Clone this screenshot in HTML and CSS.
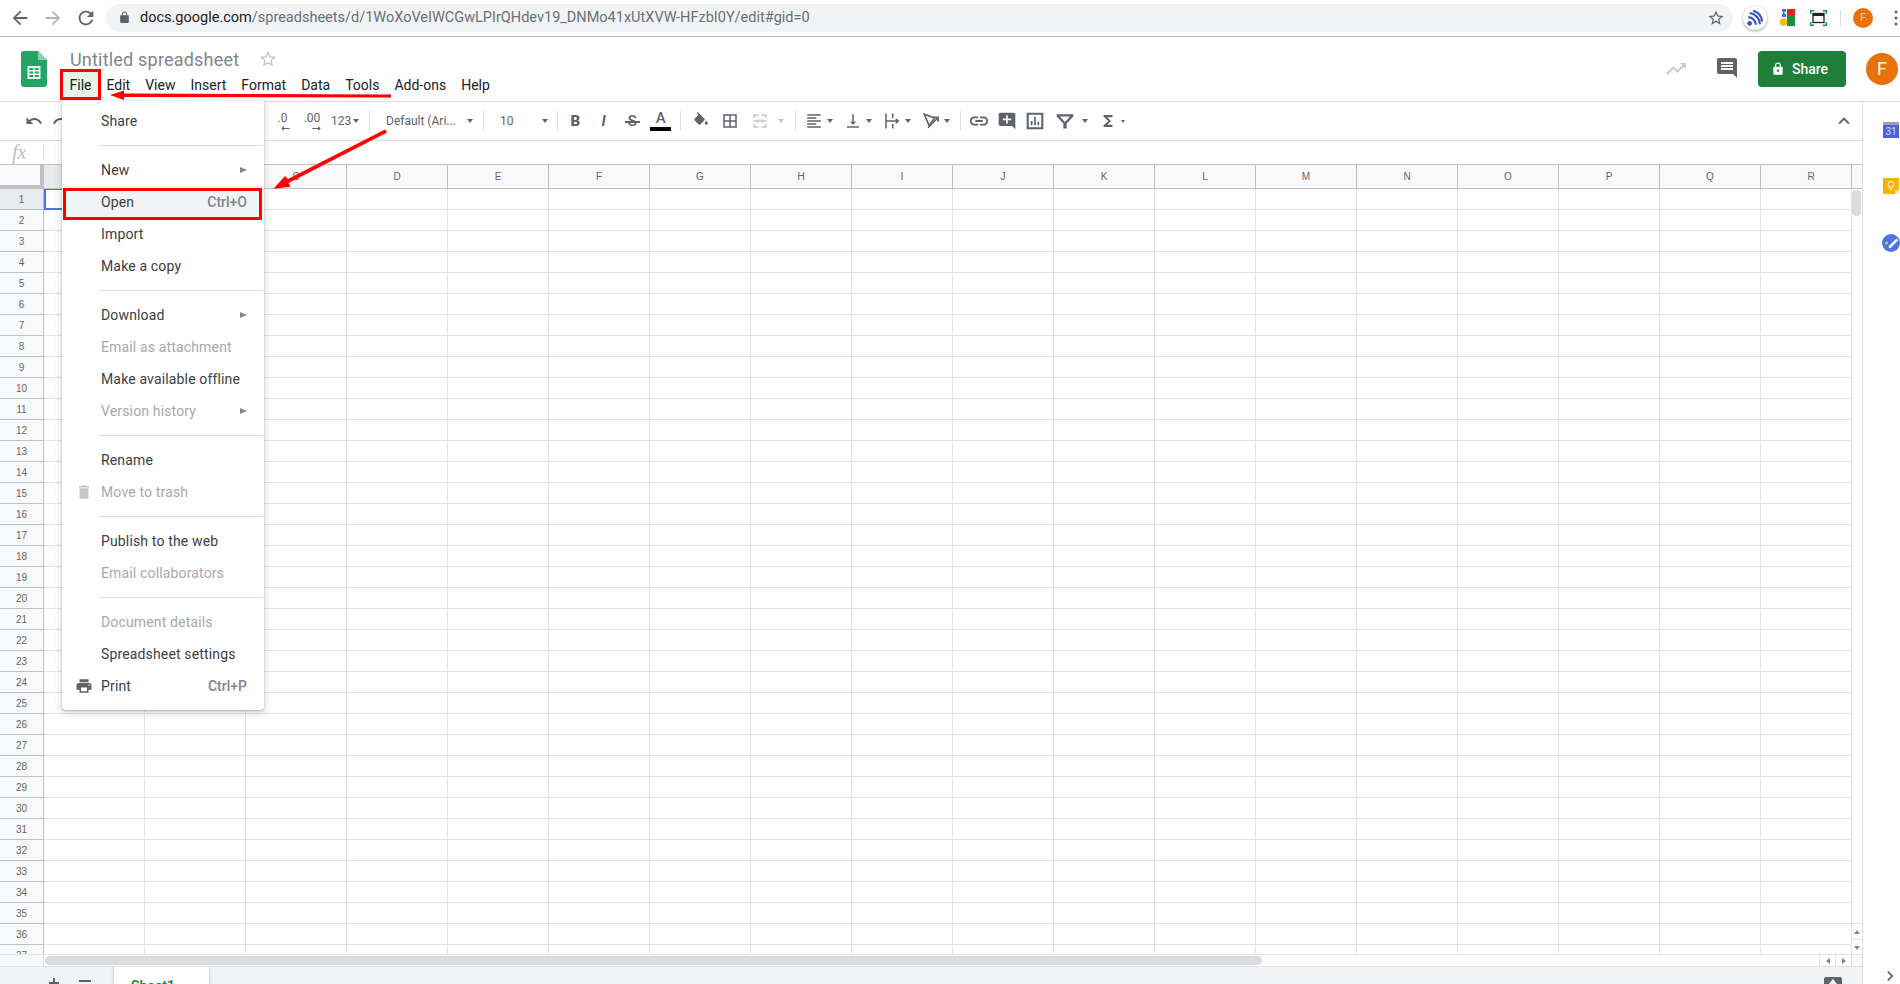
FILE: index.html
```html
<!DOCTYPE html>
<html lang="en">
<head>
  <meta charset="UTF-8">
  <title>Untitled spreadsheet - Google Sheets</title>
  <link rel="stylesheet" href="styles.css">
</head>
<body>
  <!-- browser bar -->
  <div class="browser">
    <svg class="nav-icon" viewBox="0 0 24 24"><path d="M20 11H7.83l5.59-5.59L12 4l-8 8 8 8 1.41-1.41L7.83 13H20v-2z"/></svg>
    <svg class="nav-icon nav-off" viewBox="0 0 24 24"><path d="M12 4l-1.41 1.41L16.17 11H4v2h12.17l-5.58 5.59L12 20l8-8z"/></svg>
    <svg class="nav-icon" viewBox="0 0 24 24"><path d="M17.65 6.35C16.2 4.9 14.21 4 12 4c-4.42 0-7.99 3.58-7.99 8s3.57 8 7.99 8c3.73 0 6.84-2.55 7.73-6h-2.08c-.82 2.33-3.04 4-5.65 4-3.31 0-6-2.69-6-6s2.69-6 6-6c1.66 0 3.14.69 4.22 1.78L13 11h7V4l-2.35 2.35z"/></svg>
    <div class="omnibox">
      <svg class="lock-icon" viewBox="0 0 24 24"><path d="M18 8h-1V6c0-2.76-2.24-5-5-5S7 3.24 7 6v2H6c-1.1 0-2 .9-2 2v10c0 1.1.9 2 2 2h12c1.1 0 2-.9 2-2V10c0-1.1-.9-2-2-2zm-2.9 0H8.9V6c0-1.71 1.39-3.1 3.1-3.1 1.71 0 3.1 1.39 3.1 3.1v2z"/></svg>
      <span class="url"><b>docs.google.com</b>/spreadsheets/d/1WoXoVeIWCGwLPIrQHdev19_DNMo41xUtXVW-HFzbI0Y/edit#gid=0</span>
      <svg class="bookmark" viewBox="0 0 24 24"><path d="M22 9.24l-7.19-.62L12 2 9.19 8.63 2 9.24l5.46 4.73L5.82 21 12 17.27 18.18 21l-1.63-7.03L22 9.24zM12 15.4l-3.76 2.27 1-4.28-3.32-2.88 4.38-.38L12 6.1l1.71 4.04 4.38.38-3.32 2.88 1 4.28L12 15.4z"/></svg>
    </div>
    <div class="ext-rss">
      <svg viewBox="0 0 20 20"><circle cx="4" cy="16" r="2.6" fill="#3b4fc4"/><path d="M2.5 9a9 9 0 0 1 8.500 8.500M4 4.500A13 13 0 0 1 15.500 17M8 2a14 14 0 0 1 10 12" fill="none" stroke="#3b4fc4" stroke-width="2.4"/></svg>
    </div>
    <svg class="ext-maps" viewBox="0 0 16 17"><path d="M8 0h8v6H8z" fill="#ea2027"/><path d="M8 6h8v11H8z" fill="#1c8f3c"/><circle cx="4.500" cy="13" r="3.800" fill="#f1bb1c"/><path d="M3 0h4v2.500H5.500V5H7v3H3V5h1V2.500H3z" fill="#3d6fd8"/></svg>
    <svg class="ext-shot" viewBox="0 0 17 16"><path d="M.7 4V.7h3.500M13 .7h3.300V4M16.300 12v3.300H13M4 15.300H.7V12" fill="none" stroke="#1c8f3c" stroke-width="1.400"/><rect x="3" y="3.500" width="11" height="9" fill="none" stroke="#222" stroke-width="1.300"/><path d="M3 5h11" stroke="#222" stroke-width="2"/></svg>
    <span class="browser-sep"></span>
    <span class="browser-avatar">F</span>
    <svg class="browser-menu" viewBox="0 0 4 16"><circle cx="2" cy="2" r="1.5"/><circle cx="2" cy="8" r="1.5"/><circle cx="2" cy="14" r="1.5"/></svg>
  </div>

  <!-- docs header -->
  <header class="doc-header">
    <svg class="sheets-logo" viewBox="0 0 26 36"><path d="M3 0h14l9 9v24a3 3 0 0 1-3 3H3a3 3 0 0 1-3-3V3a3 3 0 0 1 3-3z" fill="#23a566"/><path d="M17 0l9 9h-9z" fill="#8ed1b1"/><path d="M6.500 15h13v13h-13z" fill="#f1f8f4"/><path d="M8.300 17h4v2h-4zM13.700 17h4v2h-4zM8.300 20.500h4v2h-4zM13.700 20.500h4v2h-4zM8.300 24h4v2h-4zM13.700 24h4v2h-4z" fill="#23a566"/></svg>
    <div class="doc-titles">
      <div class="doc-title-row">
        <span class="doc-title">Untitled spreadsheet</span>
        <svg class="doc-star" viewBox="0 0 24 24"><path d="M22 9.24l-7.19-.62L12 2 9.19 8.63 2 9.24l5.46 4.73L5.82 21 12 17.27 18.18 21l-1.63-7.03L22 9.24zM12 15.4l-3.76 2.27 1-4.28-3.32-2.88 4.38-.38L12 6.1l1.71 4.04 4.38.38-3.32 2.88 1 4.28L12 15.4z"/></svg>
      </div>
      <nav class="menubar">
        <span class="menubar-item open">File</span>
        <span class="menubar-item">Edit</span>
        <span class="menubar-item">View</span>
        <span class="menubar-item">Insert</span>
        <span class="menubar-item">Format</span>
        <span class="menubar-item">Data</span>
        <span class="menubar-item">Tools</span>
        <span class="menubar-item">Add-ons</span>
        <span class="menubar-item">Help</span>
      </nav>
    </div>
    <div class="doc-actions">
      <svg class="trend-icon" viewBox="0 0 24 24"><path d="M16 6l2.290 2.290-4.880 4.880-4-4L2 16.590 3.410 18l6-6 4 4 6.300-6.290L22 12V6z"/></svg>
      <svg class="comments-icon" viewBox="0 0 24 24"><path d="M21.990 4c0-1.100-.890-2-1.990-2H4c-1.100 0-2 .900-2 2v12c0 1.100.900 2 2 2h14l4 4-.010-18zM18 14H6v-2h12v2zm0-3H6V9h12v2zm0-3H6V6h12v2z"/></svg>
      <button class="share-btn">
        <svg viewBox="0 0 24 24"><path d="M18 8h-1V6c0-2.760-2.240-5-5-5S7 3.240 7 6v2H6c-1.100 0-2 .900-2 2v10c0 1.100.900 2 2 2h12c1.100 0 2-.900 2-2V10c0-1.100-.900-2-2-2zm-6 9c-1.100 0-2-.900-2-2s.900-2 2-2 2 .900 2 2-.900 2-2 2zm3.100-9H8.900V6c0-1.710 1.390-3.100 3.100-3.100 1.710 0 3.100 1.390 3.100 3.100v2z"/></svg>
        Share
      </button>
      <span class="doc-avatar">F</span>
    </div>
  </header>

  <div class="workspace">
    <main class="sheet">
      <!-- toolbar -->
      <div class="toolbar">
        <div class="group g-undo">
          <span class="tool"><svg viewBox="0 0 24 24"><path d="M12.500 8c-2.650 0-5.050.990-6.900 2.600L2 7v9h9l-3.620-3.620c1.390-1.160 3.160-1.880 5.120-1.880 3.540 0 6.550 2.310 7.600 5.500l2.370-.780C21.080 11.030 17.150 8 12.500 8z"/></svg></span>
          <span class="tool"><svg viewBox="0 0 24 24"><path d="M18.400 10.600C16.550 8.990 14.150 8 11.500 8c-4.650 0-8.580 3.030-9.960 7.220L3.900 16c1.050-3.190 4.050-5.500 7.600-5.500 1.950 0 3.730.720 5.120 1.880L13 16h9V7l-3.600 3.600z"/></svg></span>
        </div>
        <div class="group g-number">
          <span class="decimal">.0<svg viewBox="0 0 10 6"><path d="M10 2.500H3V0L0 3l3 3V3.500h7z"/></svg></span>
          <span class="decimal decimal-more">.00<svg viewBox="0 0 10 6"><path d="M0 2.500h7V0l3 3-3 3V3.500H0z"/></svg></span>
          <span class="tool-text">123</span><span class="caret caret-near"></span>
        </div>
        <span class="sep"></span>
        <div class="group g-font"><span class="tool-text">Default (Ari...</span><span class="caret"></span></div>
        <span class="sep"></span>
        <div class="group g-size"><span class="tool-text">10</span><span class="caret"></span></div>
        <span class="sep"></span>
        <div class="group g-text">
          <span class="tool letter letter-b">B</span>
          <span class="tool letter letter-i">I</span>
          <span class="tool letter letter-s">S</span>
          <span class="tool letter letter-a">A</span>
        </div>
        <span class="sep"></span>
        <div class="group g-cell">
          <span class="tool"><svg viewBox="0 0 24 24"><path d="M16.560 8.940L7.620 0 6.210 1.410l2.380 2.380-5.150 5.150c-.590.590-.590 1.540 0 2.120l5.500 5.500c.290.290.680.440 1.060.440s.770-.150 1.060-.440l5.500-5.500c.590-.580.590-1.530 0-2.120zM19 11.500s-2 2.170-2 3.500c0 1.100.900 2 2 2s2-.900 2-2c0-1.330-2-3.500-2-3.500z"/></svg></span>
          <span class="tool"><svg viewBox="0 0 24 24"><path d="M3 3v18h18V3H3zm8 16H5v-6h6v6zm0-8H5V5h6v6zm8 8h-6v-6h6v6zm0-8h-6V5h6v6z"/></svg></span>
          <span class="tool-drop drop-wide disabled"><svg viewBox="0 0 24 24"><path d="M3 3h7v2H5v3H3zM14 3h7v5h-2V5h-5zM3 16h2v3h5v2H3zM19 16h2v5h-7v-2h5zM3 11h6V9l3 3-3 3v-2H3zM21 13h-6v2l-3-3 3-3v2h6z"/></svg><span class="caret"></span></span>
        </div>
        <span class="sep"></span>
        <div class="group g-align">
          <span class="tool-drop"><svg viewBox="0 0 24 24"><path d="M15 15H3v2h12v-2zm0-8H3v2h12V7zM3 13h18v-2H3v2zm0 8h18v-2H3v2zM3 3v2h18V3H3z"/></svg><span class="caret"></span></span>
          <span class="tool-drop"><svg viewBox="0 0 24 24"><path d="M16 13h-3V3h-2v10H8l4 4 4-4zM4 19v2h16v-2H4z"/></svg><span class="caret"></span></span>
          <span class="tool-drop"><svg viewBox="0 0 24 24"><path d="M3 2h2v20H3zM12 2h2v6h-2zM12 16h2v6h-2zM5 11h12V8l5 4-5 4v-3H5z"/></svg><span class="caret"></span></span>
          <span class="tool-drop"><svg class="stroked" viewBox="0 0 24 24"><path d="M3 3l14 5-7.500 10z"/><path d="M8 21L21 8M15.500 7H21.500V13"/></svg><span class="caret"></span></span>
        </div>
        <span class="sep"></span>
        <div class="group g-insert">
          <span class="tool"><svg class="icon-22" viewBox="0 0 24 24"><path d="M3.900 12c0-1.710 1.390-3.100 3.100-3.100h4V7H7c-2.760 0-5 2.240-5 5s2.240 5 5 5h4v-1.900H7c-1.710 0-3.100-1.390-3.100-3.100zM8 13h8v-2H8v2zm9-6h-4v1.900h4c1.710 0 3.100 1.390 3.100 3.100s-1.390 3.100-3.100 3.100h-4V17h4c2.760 0 5-2.240 5-5s-2.240-5-5-5z"/></svg></span>
          <span class="tool"><svg class="icon-20" viewBox="0 0 24 24"><path d="M21.990 4c0-1.100-.890-2-1.990-2H4c-1.100 0-2 .900-2 2v12c0 1.100.900 2 2 2h14l4 4-.010-18zM17 11h-4v4h-2v-4H7V9h4V5h2v4h4v2z"/></svg></span>
          <span class="tool"><svg class="icon-20" viewBox="0 0 24 24"><path d="M2 2h20v20H2zm2.500 2.500v15h15v-15zM7 12h2v5H7zM11 7h2v10h-2zM15 13h2v4h-2z" fill-rule="evenodd"/></svg></span>
          <span class="tool-drop drop-filter"><svg class="icon-20" viewBox="0 0 24 24"><path d="M2 4h20v2.500l-8 8.500v6h-4v-6L2 6.500zm3.800 2.500l6.200 6.600 6.200-6.600z" fill-rule="evenodd"/></svg><span class="caret"></span></span>
          <span class="tool-drop"><svg viewBox="0 0 24 24"><path d="M18 4H6v2l6.500 6L6 18v2h12v-3h-7l5-5-5-5h7z"/></svg><span class="caret caret-small"></span></span>
        </div>
        <svg class="collapse" viewBox="0 0 24 24"><path d="M12 8l-6 6 1.410 1.410L12 10.830l4.590 4.580L18 14z"/></svg>
      </div>

      <!-- formula bar -->
      <div class="formula-bar"><span class="fx">fx</span><span class="fx-sep"></span></div>

      <!-- column headers -->
      <div class="col-row">
        <div class="corner"></div>
        <div class="col-heads">
          <div class="col-head selected">A</div><div class="col-head">B</div><div class="col-head">C</div><div class="col-head">D</div><div class="col-head">E</div><div class="col-head">F</div><div class="col-head">G</div><div class="col-head">H</div><div class="col-head">I</div><div class="col-head">J</div><div class="col-head">K</div><div class="col-head">L</div><div class="col-head">M</div><div class="col-head">N</div><div class="col-head">O</div><div class="col-head">P</div><div class="col-head">Q</div><div class="col-head">R</div>
        </div>
        <div class="col-end"></div>
      </div>

      <!-- grid -->
      <div class="grid">
        <div class="row-nums">
          <div class="row-num selected">1</div><div class="row-num">2</div><div class="row-num">3</div><div class="row-num">4</div><div class="row-num">5</div><div class="row-num">6</div><div class="row-num">7</div><div class="row-num">8</div><div class="row-num">9</div><div class="row-num">10</div>
          <div class="row-num">11</div><div class="row-num">12</div><div class="row-num">13</div><div class="row-num">14</div><div class="row-num">15</div><div class="row-num">16</div><div class="row-num">17</div><div class="row-num">18</div><div class="row-num">19</div><div class="row-num">20</div>
          <div class="row-num">21</div><div class="row-num">22</div><div class="row-num">23</div><div class="row-num">24</div><div class="row-num">25</div><div class="row-num">26</div><div class="row-num">27</div><div class="row-num">28</div><div class="row-num">29</div><div class="row-num">30</div>
          <div class="row-num">31</div><div class="row-num">32</div><div class="row-num">33</div><div class="row-num">34</div><div class="row-num">35</div><div class="row-num">36</div><div class="row-num">37</div>
        </div>
        <div class="cells"><div class="active-cell"></div></div>
        <div class="vscroll">
          <div class="vscroll-thumb"></div>
          <div class="vscroll-btn"><span class="tri tri-up"></span></div>
          <div class="vscroll-btn"><span class="tri tri-down"></span></div>
        </div>
      </div>

      <!-- horizontal scrollbar -->
      <div class="hscroll">
        <div class="hscroll-corner"></div>
        <div class="hscroll-track"><div class="hscroll-thumb"></div></div>
        <div class="hscroll-btn"><span class="tri tri-left"></span></div>
        <div class="hscroll-btn"><span class="tri tri-right"></span></div>
        <div class="hscroll-end"></div>
      </div>

      <!-- sheet tabs -->
      <div class="tabs">
        <span class="tab-plus"></span>
        <span class="tab-list"></span>
        <div class="tab">Sheet1</div>
        <div class="explore"><span class="tri-explore"></span></div>
      </div>
    </main>

    <aside class="side-panel">
      <div class="side-icon cal-icon">31</div>
      <svg class="side-icon keep-icon" viewBox="0 0 20 20"><path d="M1 0h18a1 1 0 0 1 1 1v14l-5 5H1a1 1 0 0 1-1-1V1a1 1 0 0 1 1-1z" fill="#f4b400"/><path d="M20 15h-5v5z" fill="#fbe08a"/><circle cx="10" cy="8" r="3.700" fill="none" stroke="#fff" stroke-width="1.200"/><path d="M8.500 13h3v1.500h-3z" fill="#fff"/></svg>
      <svg class="side-icon tasks-icon" viewBox="0 0 20 20"><circle cx="10" cy="10" r="10" fill="#4e74e0"/><path d="M7 14L16 5l2 2-9 9z" fill="#fff"/><circle cx="5" cy="10" r="1.700" fill="#f4c20d"/></svg>
      <svg class="side-expand" viewBox="0 0 24 24"><path d="M10 6L8.590 7.410 13.170 12l-4.580 4.590L10 18l6-6z"/></svg>
    </aside>
  </div>

  <!-- file menu -->
  <div class="file-menu">
    <div class="item">Share</div>
    <div class="divider"></div>
    <div class="item">New<span class="sub"></span></div>
    <div class="item hover">Open<span class="keys">Ctrl+O</span></div>
    <div class="item">Import</div>
    <div class="item">Make a copy</div>
    <div class="divider"></div>
    <div class="item">Download<span class="sub"></span></div>
    <div class="item off">Email as attachment</div>
    <div class="item">Make available offline</div>
    <div class="item off">Version history<span class="sub"></span></div>
    <div class="divider"></div>
    <div class="item">Rename</div>
    <div class="item off"><svg class="item-icon" viewBox="0 0 24 24"><path d="M6 19c0 1.100.900 2 2 2h8c1.100 0 2-.900 2-2V7H6v12zM19 4h-3.500l-1-1h-5l-1 1H5v2h14V4z"/></svg>Move to trash</div>
    <div class="divider"></div>
    <div class="item">Publish to the web</div>
    <div class="item off">Email collaborators</div>
    <div class="divider"></div>
    <div class="item off">Document details</div>
    <div class="item">Spreadsheet settings</div>
    <div class="item"><svg class="item-icon" viewBox="0 0 24 24"><path d="M19 8H5c-1.660 0-3 1.340-3 3v6h4v4h12v-4h4v-6c0-1.660-1.340-3-3-3zm-3 11H8v-5h8v5zm3-7c-.550 0-1-.450-1-1s.450-1 1-1 1 .450 1 1-.450 1-1 1zm-1-9H6v4h12V3z"/></svg>Print<span class="keys">Ctrl+P</span></div>
  </div>

  <!-- red markup drawn over the screenshot -->
  <svg class="markup" viewBox="0 0 1900 984">
    <rect x="61.500" y="70.500" width="38" height="28" fill="none" stroke="#f00" stroke-width="3"/>
    <rect x="64.500" y="189.500" width="196" height="29" fill="none" stroke="#f00" stroke-width="3"/>
    <path d="M391 94.500L124 93.500V90.500L110 95L124 100V97L391 97.500z" fill="#f00"/>
    <path d="M385 129.500L288 179L285 176L273.500 188.700L290.400 186.700L288.500 183L387 132.500z" fill="#f00"/>
  </svg>
</body>
</html>
```
FILE: styles.css
```css
* {
  box-sizing: border-box;
}
html, body {
  height: 100%;
}
body {
  margin: 0;
  height: 984px;
  overflow: hidden;
  position: relative;
  display: flex;
  flex-direction: column;
  background: #fff;
  color: #202124;
  font-family: Roboto, "Liberation Sans", sans-serif;
  font-size: 14px;
}
svg {
  display: block;
  flex-shrink: 0;
}

/* browser bar */
.browser {
  height: 37px;
  flex-shrink: 0;
  display: flex;
  align-items: center;
  border-bottom: 1px solid #bdbdbd;
  padding-bottom: 1px;
}
.nav-icon {
  width: 22px;
  height: 22px;
  fill: #5f6368;
  margin-left: 11px;
}
.nav-icon:first-child {
  margin-left: 9px;
}
.nav-off {
  fill: #b5b8bb;
}
.omnibox {
  width: 1627px;
  height: 28px;
  margin-left: 9px;
  padding: 0 8px 0 12px;
  border-radius: 14px;
  background: #f1f3f4;
  display: flex;
  align-items: center;
}
.lock-icon {
  width: 13px;
  height: 13px;
  fill: #5f6368;
}
.url {
  margin-left: 9px;
  color: #6b7074;
  font-size: 14.5px;
  white-space: nowrap;
}
.url b {
  color: #202124;
  font-weight: 400;
}
.bookmark {
  width: 18px;
  height: 18px;
  margin-left: auto;
  fill: #5f6368;
}
.ext-rss {
  width: 24px;
  height: 24px;
  margin-left: 10px;
  padding: 3px;
  border-radius: 50%;
  background: #fff;
  box-shadow: 0 1px 3px rgba(0,0,0,0.4);
}
.ext-maps {
  width: 16px;
  height: 17px;
  margin-left: 12px;
}
.ext-shot {
  width: 17px;
  height: 16px;
  margin-left: 15px;
}
.browser-sep {
  width: 1px;
  height: 16px;
  margin-left: 13px;
  background: #dadce0;
}
.browser-avatar {
  width: 20px;
  height: 20px;
  margin-left: 12px;
  border-radius: 50%;
  background: #e8710a;
  color: #f8d3b4;
  font-size: 11px;
  line-height: 20px;
  text-align: center;
}
.browser-menu {
  width: 4px;
  height: 16px;
  margin-left: 21px;
  fill: #5f6368;
}

/* docs header */
.doc-header {
  height: 65px;
  flex-shrink: 0;
  display: flex;
  border-bottom: 1px solid #dadce0;
}
.sheets-logo {
  width: 26px;
  height: 36px;
  margin: 14px 0 0 21px;
}
.doc-titles {
  margin-left: 23px;
}
.doc-title-row {
  height: 24px;
  margin-top: 10px;
  display: flex;
  align-items: center;
}
.doc-title {
  color: #80868b;
  font-size: 18px;
  letter-spacing: 0.2px;
}
.doc-star {
  width: 20px;
  height: 20px;
  margin-left: 19px;
  fill: #c4c7ca;
}
.menubar {
  display: flex;
  margin: 0 0 0 -8px;
}
.menubar-item {
  height: 28px;
  padding: 0 7.5px;
  line-height: 28px;
  font-size: 14px;
  white-space: nowrap;
}
.menubar-item.open {
  background: #e6f4ea;
}
.doc-actions {
  margin-left: auto;
  display: flex;
  align-items: flex-start;
  padding-top: 14px;
}
.trend-icon {
  width: 24px;
  height: 24px;
  margin-top: 6px;
  fill: #c7c9cc;
}
.comments-icon {
  width: 24px;
  height: 24px;
  margin: 5px 0 0 27px;
  fill: #5f6368;
}
.share-btn {
  width: 88px;
  height: 36px;
  margin-left: 19px;
  display: flex;
  align-items: center;
  padding: 0 0 0 13px;
  border: none;
  border-radius: 4px;
  background: #1e8038;
  color: #fff;
  font-family: inherit;
  font-size: 14px;
  font-weight: 500;
}
.share-btn svg {
  width: 14px;
  height: 14px;
  margin-right: 7px;
  fill: #fff;
}
.doc-avatar {
  width: 32px;
  height: 32px;
  margin: 2px 2px 0 20px;
  border-radius: 50%;
  background: #e8710a;
  color: #fff;
  font-size: 18px;
  line-height: 32px;
  text-align: center;
}

/* main area */
.workspace {
  flex: 1;
  min-height: 0;
  display: flex;
}
.sheet {
  width: 1862px;
  display: flex;
  flex-direction: column;
  min-height: 0;
}
.side-panel {
  flex: 1;
  border-left: 1px solid #dadce0;
  position: relative;
  display: flex;
  flex-direction: column;
  align-items: flex-start;
  padding: 20px 0 0 20px;
  gap: 40px;
}
.side-icon {
  width: 16px;
  height: 16px;
}
.tasks-icon {
  width: 18px;
  height: 18px;
  margin-left: -1px;
}
.cal-icon {
  background: #4a63d8;
  border-top: 3px solid #9aa0b0;
  color: #d9e0f8;
  font-size: 10px;
  line-height: 13px;
  text-align: center;
}
.side-expand {
  position: absolute;
  right: 0;
  bottom: -2px;
  width: 20px;
  height: 20px;
  fill: #5f6368;
}

/* toolbar */
.toolbar {
  height: 39px;
  flex-shrink: 0;
  display: flex;
  align-items: center;
  border-bottom: 1px solid #dadce0;
  padding-right: 4px;
}
.group {
  display: flex;
  align-items: center;
  height: 24px;
  flex-shrink: 0;
}
.g-undo { width: 268px; padding-left: 20px; }
.g-number { width: 101px; }
.g-font { width: 113px; padding: 0 10px 0 16px; justify-content: space-between; }
.g-size { width: 73px; padding: 0 9px 0 16px; justify-content: space-between; }
.g-text { width: 122px; padding-left: 3px; }
.g-cell { width: 114px; padding-left: 5px; }
.g-align { width: 164px; padding-left: 4px; }
.g-insert { padding-left: 4px; }
.sep {
  width: 1px;
  height: 20px;
  flex-shrink: 0;
  background: #dadce0;
}
.tool {
  width: 28px;
  height: 24px;
  flex-shrink: 0;
  display: flex;
  align-items: center;
  justify-content: center;
}
.g-undo .tool { width: 27px; }
.g-text .tool { width: 28.5px; }
.g-cell .tool { width: 29px; }
.tool svg, .tool-drop svg {
  width: 18px;
  height: 18px;
  fill: #5f6368;
}
.tool svg.icon-20, .tool-drop svg.icon-20 {
  width: 20px;
  height: 20px;
}
.tool svg.icon-22 {
  width: 22px;
  height: 22px;
}
.tool-drop svg.stroked {
  fill: none;
  stroke: #5f6368;
  stroke-width: 2.2;
}
.tool-drop {
  width: 39px;
  height: 24px;
  flex-shrink: 0;
  display: flex;
  align-items: center;
  padding-left: 5px;
}
.tool-drop .caret {
  margin-left: 3.5px;
}
.drop-wide {
  width: 47px;
  margin-left: 2px;
}
.drop-wide .caret {
  margin-left: 9px;
}
.drop-filter {
  width: 44px;
  margin-left: 1px;
}
.drop-filter .caret {
  margin-left: 7px;
}
.disabled svg {
  fill: #c4c7ca;
}
.tool-drop.disabled svg {
  fill: #c4c7ca;
}
.disabled .caret {
  border-top-color: #c4c7ca;
}
.tool-text {
  color: #5f6368;
  font-size: 12px;
  white-space: nowrap;
}
.caret {
  width: 0;
  height: 0;
  flex-shrink: 0;
  border-left: 3.5px solid transparent;
  border-right: 3.5px solid transparent;
  border-top: 4px solid #5f6368;
}
.caret-near {
  margin-left: 2px;
}
.caret-small {
  border-left-width: 2.5px;
  border-right-width: 2.5px;
  border-top-width: 3px;
}
.decimal {
  width: 29px;
  height: 24px;
  display: flex;
  flex-direction: column;
  align-items: center;
  color: #5f6368;
  font-size: 12px;
  line-height: 16px;
  padding-top: 1px;
}
.decimal svg {
  width: 9px;
  height: 5px;
  margin-left: 6px;
  fill: #5f6368;
}
.decimal-more {
  width: 30px;
  margin-right: 4px;
}
.decimal-more svg {
  margin-left: 9px;
}
.letter {
  color: #5f6368;
  font-size: 15px;
}
.letter-b {
  font-weight: 900;
}
.letter-i {
  font-style: italic;
  font-weight: 700;
}
.letter-s {
  position: relative;
  font-weight: 500;
}
.letter-s::after {
  content: '';
  position: absolute;
  left: 7px;
  right: 7px;
  top: 12px;
  height: 2px;
  background: #5f6368;
}
.letter-a {
  flex-direction: column;
  font-weight: 500;
  line-height: 15px;
}
.letter-a::after {
  content: '';
  width: 21px;
  height: 4px;
  margin-top: 1px;
  background: #000;
}
.collapse {
  width: 22px;
  height: 22px;
  margin-left: auto;
  margin-right: 3px;
  fill: #5f6368;
}

/* formula bar */
.formula-bar {
  height: 23px;
  flex-shrink: 0;
  display: flex;
  align-items: center;
}
.fx {
  width: 43px;
  padding-left: 12px;
  color: #bdc1c6;
  font-family: "Liberation Serif", serif;
  font-style: italic;
  font-size: 20px;
}
.fx-sep {
  width: 1px;
  height: 15px;
  background: #dadce0;
}

/* column headers */
.col-row {
  height: 25px;
  flex-shrink: 0;
  display: flex;
  border-top: 1px solid #c0c0c0;
  border-bottom: 1px solid #c0c0c0;
  background: #f8f9fa;
}
.corner {
  width: 44px;
  flex-shrink: 0;
  border-right: 4px solid #c0c0c0;
  border-bottom: 3px solid #c0c0c0;
}
.col-heads {
  flex: 1;
  min-width: 0;
  display: flex;
  overflow: hidden;
}
.col-head {
  width: 101px;
  flex-shrink: 0;
  border-right: 1px solid #c0c0c0;
  color: #666;
  font-family: "Liberation Sans", sans-serif;
  font-size: 10px;
  line-height: 23px;
  text-align: center;
}
.col-head.selected {
  background: #e8eaed;
}
.col-end {
  width: 11px;
  flex-shrink: 0;
  border-left: 1px solid #c0c0c0;
}

/* grid */
.grid {
  flex: 1;
  min-height: 0;
  display: flex;
  overflow: hidden;
}
.row-nums {
  width: 44px;
  flex-shrink: 0;
  background: #f8f9fa;
  border-right: 1px solid #c0c0c0;
}
.row-num {
  height: 21px;
  border-bottom: 1px solid #c0c0c0;
  color: #666;
  font-family: "Liberation Sans", sans-serif;
  font-size: 10px;
  line-height: 22px;
  text-align: center;
}
.row-num.selected {
  background: #e8eaed;
}
.cells {
  flex: 1;
  min-width: 0;
  position: relative;
  background-image:
    linear-gradient(to right, transparent 100px, #e2e3e3 100px),
    linear-gradient(to bottom, transparent 20px, #e2e3e3 20px);
  background-size: 101px 21px;
}
.active-cell {
  position: absolute;
  left: 0;
  top: -1px;
  width: 101px;
  height: 22px;
  border: 2px solid #4a74e0;
}
.vscroll {
  width: 11px;
  flex-shrink: 0;
  display: flex;
  flex-direction: column;
  border-left: 1px solid #e2e3e3;
}
.vscroll-thumb {
  width: 9px;
  height: 26px;
  margin: 1px 0 707px 0;
  border-radius: 4px;
  background: #dadce0;
  flex-shrink: 0;
}
.vscroll-btn {
  height: 16px;
  flex-shrink: 0;
  display: flex;
  align-items: center;
  justify-content: center;
  border-top: 1px solid #e2e3e3;
}
.tri {
  width: 0;
  height: 0;
  border: 3px solid transparent;
}
.tri-up { border-top: 0; border-bottom-color: #80868b; border-width: 0 3.5px 4px; }
.tri-down { border-bottom: 0; border-top-color: #80868b; border-width: 4px 3.5px 0; }
.tri-left { border-right-color: #80868b; border-width: 3.5px 4px 3.5px 0; }
.tri-right { border-left-color: #80868b; border-width: 3.5px 0 3.5px 4px; }

/* horizontal scrollbar */
.hscroll {
  height: 12px;
  flex-shrink: 0;
  display: flex;
  border-top: 1px solid #e2e3e3;
}
.hscroll-corner {
  width: 44px;
  flex-shrink: 0;
  background: #f8f9fa;
  border-right: 1px solid #e2e3e3;
}
.hscroll-track {
  flex: 1;
  min-width: 0;
  padding: 1px 0 0 1px;
}
.hscroll-thumb {
  width: 1217px;
  height: 9px;
  border-radius: 5px;
  background: #dadce0;
}
.hscroll-btn {
  width: 16px;
  flex-shrink: 0;
  display: flex;
  align-items: center;
  justify-content: center;
  border-left: 1px solid #e2e3e3;
}
.hscroll-end {
  width: 11px;
  flex-shrink: 0;
  background: #f8f9fa;
  border-left: 1px solid #e2e3e3;
}

/* sheet tabs */
.tabs {
  height: 18px;
  flex-shrink: 0;
  display: flex;
  align-items: flex-start;
  background: #f1f3f4;
  overflow: hidden;
  border-top: 1px solid #e2e3e3;
}
.tab-plus {
  width: 10px;
  height: 10px;
  margin: 11px 0 0 49px;
  background:
    linear-gradient(#5f6368, #5f6368) center / 2px 10px no-repeat,
    linear-gradient(#5f6368, #5f6368) center / 10px 2px no-repeat;
}
.tab-list {
  width: 12px;
  height: 7px;
  margin: 13px 0 0 20px;
  border-top: 2px solid #5f6368;
  border-bottom: 2px solid #5f6368;
}
.tab {
  width: 95px;
  height: 30px;
  margin-left: 23px;
  padding: 11px 0 0 17px;
  background: #fff;
  color: #188038;
  font-size: 14px;
  font-weight: 500;
  line-height: 16px;
  box-shadow: 0 0 3px rgba(60,64,67,0.35);
}
.explore {
  width: 18px;
  height: 20px;
  margin: 10px 20px 0 auto;
  padding-top: 2px;
  border-radius: 2px;
  background: #5f6368;
  display: flex;
  justify-content: center;
}
.tri-explore {
  width: 0;
  height: 0;
  border-left: 4px solid transparent;
  border-right: 4px solid transparent;
  border-bottom: 5px solid #fff;
}

/* file menu */
.file-menu {
  position: absolute;
  left: 62px;
  top: 101px;
  width: 202px;
  padding: 4px 0 8px;
  background: #fff;
  border-radius: 0 0 4px 4px;
  box-shadow: 0 2px 6px 2px rgba(60,64,67,0.15), 0 1px 2px rgba(60,64,67,0.3);
}
.item {
  height: 32px;
  display: flex;
  align-items: center;
  padding: 0 17px 0 39px;
  position: relative;
  color: #3c4043;
  font-size: 14px;
  letter-spacing: 0.15px;
  white-space: nowrap;
}
.item.hover {
  background: #f1f3f4;
}
.item.off {
  color: #a6a9ad;
}
.item-icon {
  position: absolute;
  left: 13px;
  top: 7px;
  width: 18px;
  height: 18px;
  fill: #5f6368;
}
.off .item-icon {
  fill: #c4c7ca;
}
.sub {
  width: 0;
  height: 0;
  margin-left: auto;
  border-top: 3.5px solid transparent;
  border-bottom: 3.5px solid transparent;
  border-left: 7px solid #80868b;
}
.keys {
  margin-left: auto;
  color: #80868b;
  font-weight: 500;
  font-size: 14px;
  letter-spacing: 0;
}
.divider {
  height: 1px;
  margin: 8px 1px 8px 37px;
  background: #dadce0;
}

/* red markup */
.markup {
  position: absolute;
  left: 0;
  top: 0;
  width: 1900px;
  height: 984px;
  pointer-events: none;
}
```
